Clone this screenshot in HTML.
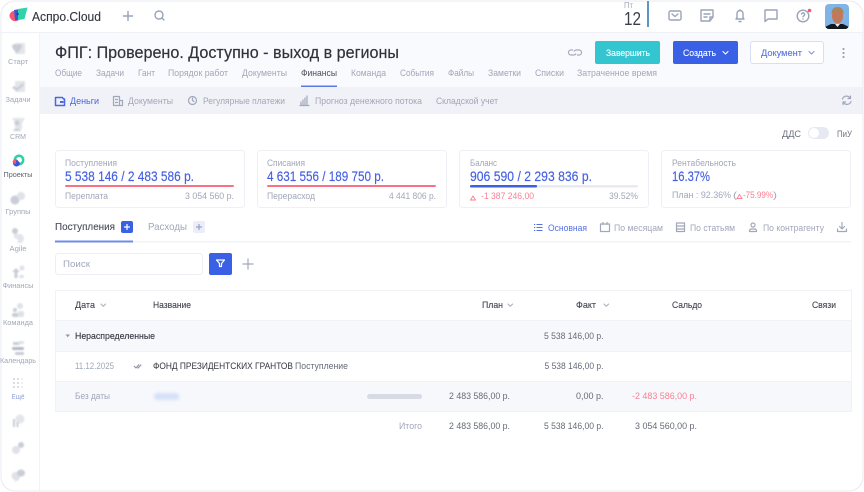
<!DOCTYPE html>
<html lang="ru"><head><meta charset="utf-8"><title>Аспро.Cloud</title>
<style>
html,body{margin:0;padding:0;background:#fff;width:864px;height:492px;overflow:hidden}
svg{display:block;font-family:"Liberation Sans",sans-serif;filter:blur(.3px)}
text{white-space:pre}
.g{fill:#a0a7b8}.d{fill:#33363f}.b{fill:#4460e2}.r{fill:#fa7f92}.m{fill:#6d7280}
.ic{fill:none;stroke:#a0a8ba;stroke-width:1.2;stroke-linecap:round;stroke-linejoin:round}
.tp{fill:none;stroke:#9aa3b6;stroke-width:1.4;stroke-linecap:round;stroke-linejoin:round}
</style></head><body>
<svg width="864" height="492" viewBox="0 0 864 492" xmlns="http://www.w3.org/2000/svg">
<defs>
<filter id="bl" x="-30%" y="-30%" width="160%" height="160%"><feGaussianBlur stdDeviation="0.8"/></filter>
<filter id="bl2" x="-30%" y="-80%" width="160%" height="260%"><feGaussianBlur stdDeviation="1.6"/></filter>
<clipPath id="fr"><rect x="1" y="1" width="862" height="490" rx="14"/></clipPath>
<clipPath id="av"><rect x="825" y="4" width="24" height="25" rx="4"/></clipPath>
</defs>
<rect width="864" height="492" fill="#fff"/>
<g clip-path="url(#fr)">
<rect x="40" y="33" width="824" height="54" fill="#f9fafd"/>
<rect x="40" y="87" width="824" height="27" fill="#f0f2f7"/>
<rect x="0" y="32" width="864" height="1" fill="#eff1f6"/>
<rect x="39" y="33" width="1" height="459" fill="#f1f3f7"/>
</g>
<rect x="1" y="1" width="862" height="490" rx="14" fill="none" stroke="#e9ebf3" stroke-width="1"/>

<!-- logo -->
<path d="M9.500 16a5 5 0 0 1 6-5l3 .5-1.500 9.500a6 6 0 0 1-7.500-5z" fill="#f8566c"/>
<path d="M14 10l6-1-1.500 11.500-3.500-.5z" fill="#3a55d8"/>
<path d="M18 9l9.500-1.500-3 11.500-6.500 1z" fill="#2fd3a8"/>
<circle cx="17.500" cy="14" r="1.300" fill="#2c3fb0"/>
<text x="32" y="21" font-size="12.500" fill="#33363f" stroke="#33363f" stroke-width=".12" textLength="69" lengthAdjust="spacingAndGlyphs">Аспро.Cloud</text>
<path d="M128 11.500v9M123.500 16h9" class="tp"/>
<circle cx="159" cy="15" r="4" class="tp"/><path d="M162 18l2 2" class="tp"/>
<text x="624" y="8" font-size="8" class="g" textLength="9" lengthAdjust="spacingAndGlyphs">Пт</text>
<text x="624" y="25" font-size="18" fill="#3b3f4a" textLength="17" lengthAdjust="spacingAndGlyphs">12</text>
<rect x="647" y="1" width="2" height="26" fill="#5b95c6"/>

<rect x="669" y="11" width="12" height="9" rx="1.500" class="tp"/><path d="M672 14l3 2.500 3-2.500" class="tp"/>
<path d="M701 10h12v7l-3 4h-9zM704 14h6M704 17h3M713 17h-3v4" class="tp"/>
<path d="M736 19h8l-1-1.500v-4a3 3 0 0 0-6 0v4zM740 10v.5M739 21.500h2" class="tp"/>
<path d="M765 10h12v9h-9l-3 2.500z" class="tp"/>
<circle cx="803" cy="16" r="5.800" class="tp"/><path d="M801.500 14a1.600 1.600 0 1 1 2 2l-.5.8M803 19v.1" class="tp"/>
<circle cx="809.500" cy="10.500" r="1.800" fill="#f8566c"/>
<g clip-path="url(#av)">
<rect x="825" y="4" width="24" height="25" fill="#7fb4e6"/>
<path d="M825 29v-2l6-3h12l6 3v2z" fill="#14181f"/>
<path d="M835 24l2.500 3 2.500-3z" fill="#eee"/>
<ellipse cx="837.500" cy="16" rx="5.500" ry="7.500" fill="#c4785a"/>
<path d="M831.500 14q0-7 6-7t6 7q-2-3-6-3t-6 3z" fill="#a8855a"/>
</g>

<!-- sidebar -->
<g fill="#c9cdd6" filter="url(#bl)">
<rect x="15" y="43" width="10" height="11" rx="1" fill="#e3e5ea"/><path d="M12 46a3 3 0 0 1 5-1 3 3 0 0 1 5 1c0 3-5 7-5 7s-5-4-5-7z"/>
<rect x="15" y="81" width="10" height="11" rx="1" fill="#e3e5ea"/><path d="M12 88l2-2 3 2 6-5 1 2-7 6z"/>
<path d="M12 118h13l-3 5v6h-7v-6z" fill="#e3e5ea"/><circle cx="17" cy="123" r="2.500"/><path d="M13 131c0-3 8-3 8 0z"/>
<ellipse cx="15" cy="200" rx="4.500" ry="4.500"/><circle cx="21" cy="196" r="4" fill="#e0e2e7"/>
<circle cx="15" cy="231" r="3" /><path d="M14 234h7a5 5 0 0 1 0 9h-4q3-4-3-5z" fill="#e3e5ea"/>
<path d="M16 268l-4 4h2.500v6h3v-6h2.500z"/><circle cx="22" cy="268" r="2.500" fill="#e0e2e7"/><rect x="19" y="275" width="5" height="3" rx="1.500" fill="#e0e2e7"/>
<circle cx="20" cy="306" r="3" fill="#e0e2e7"/><circle cx="15" cy="310" r="2"/><rect x="12" y="313" width="7" height="4" rx="2"/><rect x="18" y="311" width="6" height="6" rx="2" fill="#e0e2e7"/>
<rect x="13" y="342" width="7" height="3" rx="1"/><rect x="12" y="347" width="12" height="3" rx="1.500" fill="#b5b9c3"/><rect x="15" y="352" width="9" height="3" rx="1"/><rect x="18" y="341" width="6" height="3" rx="1" fill="#e0e2e7"/>
<circle cx="20" cy="419" r="4.500" fill="#e3e5ea"/><rect x="13" y="419" width="2" height="8"/><rect x="16.500" y="422" width="2" height="5"/>
<circle cx="16" cy="450" r="4" fill="#e0e2e7"/><circle cx="21" cy="445" r="3"/>
<ellipse cx="16" cy="476" rx="4.500" ry="4" fill="#e0e2e7"/><path d="M14 482l2-4 3 2z" fill="#e0e2e7"/><ellipse cx="21" cy="473" rx="4" ry="3.500"/>
</g>
<g fill="#bfc4cf"><circle cx="14" cy="379" r=".9"/><circle cx="18" cy="379" r=".9"/><circle cx="22" cy="379" r=".9" fill="#dfe1e7"/><circle cx="14" cy="383" r=".9"/><circle cx="18" cy="383" r=".9"/><circle cx="22" cy="383" r=".9" fill="#dfe1e7"/><circle cx="14" cy="387" r=".9"/><circle cx="18" cy="387" r=".9"/><circle cx="22" cy="387" r=".9" fill="#dfe1e7"/></g>
<!-- Projects icon -->
<circle cx="19" cy="160" r="4.200" fill="none" stroke="#2fcfa8" stroke-width="2.500"/>
<path d="M13 163a3.500 3.500 0 0 1 4-3.500l3 3.500a3.500 3.500 0 0 1-7 0z" fill="#3a55d8"/>
<path d="M12.500 162a3 3 0 0 1 4-2.500l-1 5z" fill="#f8566c"/>

<g font-size="7.500" class="g" text-anchor="middle">
<text x="18" y="64" textLength="20" lengthAdjust="spacingAndGlyphs">Старт</text>
<text x="18" y="102" textLength="25" lengthAdjust="spacingAndGlyphs">Задачи</text>
<text x="18" y="139" textLength="16" lengthAdjust="spacingAndGlyphs">CRM</text>
<text x="18" y="177" style="fill:#5d6270" textLength="29" lengthAdjust="spacingAndGlyphs">Проекты</text>
<text x="18" y="214" textLength="25" lengthAdjust="spacingAndGlyphs">Группы</text>
<text x="18" y="251" textLength="17" lengthAdjust="spacingAndGlyphs">Agile</text>
<text x="18" y="288" textLength="31" lengthAdjust="spacingAndGlyphs">Финансы</text>
<text x="18" y="325" textLength="30" lengthAdjust="spacingAndGlyphs">Команда</text>
<text x="18" y="363" textLength="36" lengthAdjust="spacingAndGlyphs">Календарь</text>
<text x="18" y="399" style="fill:#8fa3d8" textLength="13" lengthAdjust="spacingAndGlyphs">Ещё</text>
</g>

<!-- title -->
<text x="55" y="58" font-size="17" fill="#2f323b" stroke="#2f323b" stroke-width=".2" textLength="344" lengthAdjust="spacingAndGlyphs">ФПГ: Проверено. Доступно - выход в регионы</text>
<g font-size="9.500" class="g">
<text x="55" y="76" textLength="27" lengthAdjust="spacingAndGlyphs">Общие</text>
<text x="96" y="76" textLength="28" lengthAdjust="spacingAndGlyphs">Задачи</text>
<text x="138" y="76" textLength="17" lengthAdjust="spacingAndGlyphs">Гант</text>
<text x="168" y="76" textLength="60" lengthAdjust="spacingAndGlyphs">Порядок работ</text>
<text x="242" y="76" textLength="45" lengthAdjust="spacingAndGlyphs">Документы</text>
<text x="301" y="76" style="fill:#4b4f5c" textLength="36" lengthAdjust="spacingAndGlyphs">Финансы</text>
<text x="351" y="76" textLength="35" lengthAdjust="spacingAndGlyphs">Команда</text>
<text x="400" y="76" textLength="34" lengthAdjust="spacingAndGlyphs">События</text>
<text x="448" y="76" textLength="26" lengthAdjust="spacingAndGlyphs">Файлы</text>
<text x="488" y="76" textLength="33" lengthAdjust="spacingAndGlyphs">Заметки</text>
<text x="535" y="76" textLength="29" lengthAdjust="spacingAndGlyphs">Списки</text>
<text x="577" y="76" textLength="80" lengthAdjust="spacingAndGlyphs">Затраченное время</text>
</g>
<rect x="301" y="85.500" width="36" height="1.500" fill="#5c78e6"/>

<!-- header buttons -->
<path d="M573 51h-2a2.500 2.500 0 0 0 0 5h3a2.500 2.500 0 0 0 2-1.500M577 56h2a2.500 2.500 0 0 0 0-5h-3a2.500 2.500 0 0 0-2 1.500" fill="none" stroke="#a5acbc" stroke-width="1.200" transform="translate(0,-1)"/>
<rect x="595" y="41" width="65" height="23" rx="2" fill="#33c6d0"/>
<text x="606" y="56" font-size="9.500" fill="#fff" stroke="#fff" stroke-width=".12" textLength="44" lengthAdjust="spacingAndGlyphs">Завершить</text>
<rect x="673" y="41" width="65" height="23" rx="2" fill="#3a60e6"/>
<text x="683" y="56" font-size="9.500" fill="#fff" stroke="#fff" stroke-width=".12" textLength="33" lengthAdjust="spacingAndGlyphs">Создать</text>
<path d="M723 51.500l2.500 2.500 2.500-2.500" fill="none" stroke="#fff" stroke-width="1.100" stroke-linecap="round"/>
<rect x="750.500" y="41.500" width="73" height="22" rx="2.500" fill="#fff" stroke="#d6def8"/>
<text x="761" y="56" font-size="9.500" fill="#5b74e2" stroke="#5b74e2" stroke-width=".12" textLength="41" lengthAdjust="spacingAndGlyphs">Документ</text>
<path d="M809 51.500l2.500 2.500 2.500-2.500" fill="none" stroke="#7f93e6" stroke-width="1.100" stroke-linecap="round"/>
<g fill="#9aa2b4"><circle cx="843.500" cy="49" r="1.100"/><circle cx="843.500" cy="53" r="1.100"/><circle cx="843.500" cy="57" r="1.100"/></g>

<!-- sub tabs -->
<path d="M55.500 97.500h7l1 1.500h1v6.500h-9z" fill="none" stroke="#4a66e2" stroke-width="1.500" stroke-linejoin="round"/><rect x="60" y="101" width="3.500" height="2" fill="#4a66e2"/>
<text x="70" y="104" font-size="9.500" fill="#4a66e2" textLength="29" lengthAdjust="spacingAndGlyphs">Деньги</text>
<path d="M113.500 96.500h6v9h-6zM119.500 100.500h3v5h-3M115.500 99.500h2M115.500 102.500h2" class="ic"/>
<text x="128" y="104" font-size="9.500" class="g" textLength="45" lengthAdjust="spacingAndGlyphs">Документы</text>
<circle cx="192.500" cy="100.500" r="4" class="ic"/><path d="M192.500 98v2.500l1.500 1" class="ic"/>
<text x="203" y="104" font-size="9.500" class="g" textLength="82" lengthAdjust="spacingAndGlyphs">Регулярные платежи</text>
<path d="M300 105.500h9M301 105v-3M303 105v-5M305 105v-7M307 105v-9" class="ic"/>
<text x="315" y="104" font-size="9.500" class="g" textLength="107" lengthAdjust="spacingAndGlyphs">Прогноз денежного потока</text>
<text x="436" y="104" font-size="9.500" class="g" textLength="62" lengthAdjust="spacingAndGlyphs">Складской учет</text>
<path d="M842.500 99.500a4.200 4.200 0 0 1 7.500-1M851 102a4.200 4.200 0 0 1-7.500 1M850.500 96.500v2.500h-2.500M843 105v-2.500h2.500" class="ic" transform="translate(0,-.5)"/>

<!-- toggle -->
<text x="782" y="137" font-size="9.500" fill="#6d7280" textLength="19" lengthAdjust="spacingAndGlyphs">ДДС</text>
<rect x="808" y="127" width="21" height="12" rx="6" fill="#e6e9f2"/><circle cx="814" cy="133" r="5" fill="#fff"/>
<text x="837" y="137" font-size="9.500" fill="#6d7280" textLength="15" lengthAdjust="spacingAndGlyphs">ПиУ</text>

<!-- cards -->
<g fill="#fff" stroke="#eef0f5">
<rect x="55.500" y="150.500" width="189" height="57" rx="3"/>
<rect x="257.500" y="150.500" width="189" height="57" rx="3"/>
<rect x="459.500" y="150.500" width="189" height="57" rx="3"/>
<rect x="661.500" y="150.500" width="189" height="57" rx="3"/>
</g>
<g font-size="9.500" class="g">
<text x="65" y="166" textLength="52" lengthAdjust="spacingAndGlyphs">Поступления</text>
<text x="267" y="166" textLength="38" lengthAdjust="spacingAndGlyphs">Списания</text>
<text x="470" y="166" textLength="27" lengthAdjust="spacingAndGlyphs">Баланс</text>
<text x="672" y="166" textLength="64" lengthAdjust="spacingAndGlyphs">Рентабельность</text>
<text x="65" y="199" textLength="43" lengthAdjust="spacingAndGlyphs">Переплата</text>
<text x="185" y="199" textLength="49" lengthAdjust="spacingAndGlyphs">3 054 560 р.</text>
<text x="267" y="199" textLength="48" lengthAdjust="spacingAndGlyphs">Перерасход</text>
<text x="389" y="199" textLength="47" lengthAdjust="spacingAndGlyphs">4 441 806 р.</text>
<text x="609" y="199" textLength="29" lengthAdjust="spacingAndGlyphs">39.52%</text>
<text x="672" y="198" textLength="59" lengthAdjust="spacingAndGlyphs">План : 92.36%</text>
<text x="733" y="198" textLength="4" lengthAdjust="spacingAndGlyphs">(</text>
<text x="773" y="198" textLength="4" lengthAdjust="spacingAndGlyphs">)</text>
</g>
<g font-size="13.500" class="b" stroke="#4460e2" stroke-width=".15">
<text x="65" y="181" textLength="129" lengthAdjust="spacingAndGlyphs">5 538 146 / 2 483 586 р.</text>
<text x="267" y="181" textLength="117" lengthAdjust="spacingAndGlyphs">4 631 556 / 189 750 р.</text>
<text x="470" y="181" textLength="122" lengthAdjust="spacingAndGlyphs">906 590 / 2 293 836 р.</text>
<text x="672" y="181" textLength="38" lengthAdjust="spacingAndGlyphs">16.37%</text>
</g>
<rect x="65" y="185" width="169" height="2" rx="1" fill="#f97187"/>
<rect x="267" y="185" width="169" height="2" rx="1" fill="#f97187"/>
<rect x="470" y="185" width="168" height="2.500" rx="1" fill="#e7eaf3"/><rect x="470" y="185" width="67" height="2.500" rx="1" fill="#3a60e6"/>
<path d="M473 196l-2.500 4h5z" fill="none" stroke="#fa7f92" stroke-width=".9"/>
<text x="481" y="199" font-size="9.500" class="r" textLength="53" lengthAdjust="spacingAndGlyphs">-1 387 246,00</text>
<path d="M739.500 194.500l-2.500 4h5z" fill="none" stroke="#fa7f92" stroke-width=".9"/>
<text x="743" y="198" font-size="9.500" class="r" textLength="30" lengthAdjust="spacingAndGlyphs">-75.99%</text>

<!-- tabs -->
<text x="55" y="230" font-size="10.500" fill="#4b4f5c" stroke="#4b4f5c" stroke-width=".12" textLength="60" lengthAdjust="spacingAndGlyphs">Поступления</text>
<rect x="121" y="221" width="12" height="12" rx="2" fill="#3a60e6"/><path d="M124 227h6M127 224v6" stroke="#fff" stroke-width="1.200"/>
<text x="148" y="230" font-size="10.500" class="g" textLength="39" lengthAdjust="spacingAndGlyphs">Расходы</text>
<rect x="193" y="221" width="12" height="12" rx="2" fill="#ebeefa"/><path d="M196 227h6M199 224v6" stroke="#97a3c8" stroke-width="1.200"/>
<rect x="55" y="241" width="796" height="1.500" fill="#f1f3f7"/>
<rect x="55" y="240.500" width="78" height="2" fill="#6f8bea"/>

<path d="M536.500 224.500h6M536.500 227.500h6M536.500 230.500h6" stroke="#5570e2" stroke-width="1.100" fill="none"/><path d="M534 224.500h1.200M534 227.500h1.200M534 230.500h1.200" stroke="#5570e2" stroke-width="1.100"/>
<text x="548" y="231" font-size="9.500" fill="#5570e2" textLength="39" lengthAdjust="spacingAndGlyphs">Основная</text>
<path d="M600.500 224h9v7.500h-9zM603 222.500v2M607 222.500v2" class="ic"/>
<text x="614" y="231" font-size="9.500" class="g" textLength="49" lengthAdjust="spacingAndGlyphs">По месяцам</text>
<path d="M676.500 223h8v8.500h-8zM676.500 226h8M676.500 229h8" class="ic"/>
<text x="690" y="231" font-size="9.500" class="g" textLength="45" lengthAdjust="spacingAndGlyphs">По статьям</text>
<circle cx="753" cy="225" r="2" class="ic"/><path d="M749.500 231.500v-1a2 2 0 0 1 2-1.500h3a2 2 0 0 1 2 1.500v1z" class="ic"/>
<text x="763" y="231" font-size="9.500" class="g" textLength="61" lengthAdjust="spacingAndGlyphs">По контрагенту</text>
<path d="M842 222.500v6M839.500 226.500l2.500 2.500 2.500-2.500M837.500 229v2.500h9V229" class="ic"/>

<!-- search -->
<rect x="55.500" y="253.500" width="147" height="21" rx="3" fill="#fff" stroke="#eceef3"/>
<text x="63" y="267" font-size="9.500" class="g" textLength="27" lengthAdjust="spacingAndGlyphs">Поиск</text>
<rect x="209" y="253" width="23" height="22" rx="2" fill="#3a60e6"/>
<path d="M216.500 260h8l-3 3.500v3h-2v-3z" fill="none" stroke="#fff" stroke-width="1.200" stroke-linejoin="round"/>
<path d="M248 259v10M243 264h10" stroke="#a0a8ba" stroke-width="1.200" stroke-linecap="round"/>

<!-- table -->
<rect x="55.500" y="290.500" width="796" height="121" fill="#fff" stroke="#f0f2f6"/>
<rect x="56" y="321" width="795" height="30" fill="#f7f8fc"/>
<rect x="56" y="381" width="795" height="30" fill="#f7f8fc"/>
<g fill="#eff1f6"><rect x="56" y="320" width="795" height="1"/><rect x="56" y="351" width="795" height="1"/><rect x="56" y="381" width="795" height="1"/><rect x="56" y="411" width="795" height="1"/></g>

<g font-size="9" fill="#3f434e" stroke="#3f434e" stroke-width=".1">
<text x="75" y="308" textLength="20" lengthAdjust="spacingAndGlyphs">Дата</text>
<text x="153" y="308" textLength="38" lengthAdjust="spacingAndGlyphs">Название</text>
<text x="482" y="308" textLength="21" lengthAdjust="spacingAndGlyphs">План</text>
<text x="576" y="308" textLength="20" lengthAdjust="spacingAndGlyphs">Факт</text>
<text x="672" y="308" textLength="30" lengthAdjust="spacingAndGlyphs">Сальдо</text>
<text x="812" y="308" textLength="24" lengthAdjust="spacingAndGlyphs">Связи</text>
</g>
<g fill="none" stroke="#a5acbc" stroke-width="1" stroke-linecap="round">
<path d="M101 304l2.300 2.300 2.300-2.300M508 304l2.300 2.300 2.300-2.300M604 304l2.300 2.300 2.300-2.300"/>
</g>
<path d="M65.500 334.500h4.500l-2.250 2.700z" fill="#8e96aa"/>
<text x="75" y="339" font-size="9.500" fill="#33363f" stroke="#33363f" stroke-width=".12" textLength="80" lengthAdjust="spacingAndGlyphs">Нераспределенные</text>
<g font-size="9" fill="#666b78">
<text x="544" y="339" textLength="59.500" lengthAdjust="spacingAndGlyphs">5 538 146,00 р.</text>
<text x="544.500" y="369" textLength="59" lengthAdjust="spacingAndGlyphs">5 538 146,00 р.</text>
<text x="449" y="399" textLength="61" lengthAdjust="spacingAndGlyphs">2 483 586,00 р.</text>
<text x="576" y="399" textLength="27.500" lengthAdjust="spacingAndGlyphs">0,00 р.</text>
<text x="449" y="429" textLength="61" lengthAdjust="spacingAndGlyphs">2 483 586,00 р.</text>
<text x="544" y="429" textLength="59.500" lengthAdjust="spacingAndGlyphs">5 538 146,00 р.</text>
<text x="635" y="429" textLength="62" lengthAdjust="spacingAndGlyphs">3 054 560,00 р.</text>
<text x="295" y="369" textLength="53" lengthAdjust="spacingAndGlyphs">Поступление</text>
</g>
<text x="632" y="399" font-size="9" class="r" textLength="65" lengthAdjust="spacingAndGlyphs">-2 483 586,00 р.</text>
<text x="75" y="369" font-size="9" class="g" textLength="39" lengthAdjust="spacingAndGlyphs">11.12.2025</text>
<path d="M134 366l2 2 3-3.500M137.500 367.500l.7.5 3-3.500" fill="none" stroke="#8a92a5" stroke-width="1.100"/>
<text x="153" y="369" font-size="9" fill="#33363f" textLength="140" lengthAdjust="spacingAndGlyphs">ФОНД ПРЕЗИДЕНТСКИХ ГРАНТОВ</text>
<text x="75" y="399" font-size="9" class="g" textLength="35" lengthAdjust="spacingAndGlyphs">Без даты</text>
<rect x="154" y="393" width="25" height="7" rx="3" fill="#d4e0f8" filter="url(#bl2)"/>
<rect x="367" y="394" width="55" height="5" rx="2.500" fill="#d7dbe4"/>
<text x="399" y="429" font-size="9" class="g" textLength="23" lengthAdjust="spacingAndGlyphs">Итого</text>
</svg>
</body></html>
